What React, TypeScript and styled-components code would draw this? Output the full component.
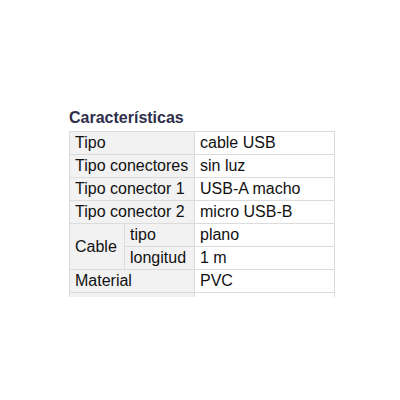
import React from "react";
import styled, { createGlobalStyle } from "styled-components";

const Global = createGlobalStyle`
  html, body { margin: 0; padding: 0; background: #fff; }
  body { font-family: "Liberation Sans", Arial, sans-serif; }
`;

const Page = styled.div`
  width: 400px;
  height: 400px;
  padding: 109px 0 0 69px;
  box-sizing: border-box;
`;

const Title = styled.h3`
  margin: 0 0 4px 0;
  font-size: 16px;
  line-height: 18px;
  font-weight: bold;
  color: #2f2f4c;
`;

const Clip = styled.div`
  height: 166px;
  overflow: hidden;
  width: 270px;
`;

const Table = styled.table`
  border-collapse: collapse;
  width: 266px;
  table-layout: fixed;
  font-size: 16px;
  color: #111;
`;

const Cell = styled.td<{ $head?: boolean }>`
  border: 1px solid #dcdcdc;
  padding: 2px 5px 2px 5px;
  height: 18px;
  line-height: 18px;
  background: ${(p) => (p.$head ? "#f2f2f2" : "#fff")};
  white-space: nowrap;
  vertical-align: middle;
`;

const Row = styled.tr``;

const rows: [string, string][] = [
  ["Tipo", "cable USB"],
  ["Tipo conectores", "sin luz"],
  ["Tipo conector 1", "USB-A macho"],
  ["Tipo conector 2", "micro USB-B"],
];

export default function App() {
  return (
    <Page>
      <Global />
      <Title>Características</Title>
      <Clip>
        <Table>
          <colgroup>
            <col style={{ width: 55 }} />
            <col style={{ width: 70 }} />
            <col style={{ width: 140 }} />
          </colgroup>
          <tbody>
            {rows.map(([k, v]) => (
              <Row key={k}>
                <Cell $head colSpan={2}>{k}</Cell>
                <Cell>{v}</Cell>
              </Row>
            ))}
            <Row>
              <Cell $head rowSpan={2}>Cable</Cell>
              <Cell $head>tipo</Cell>
              <Cell>plano</Cell>
            </Row>
            <Row>
              <Cell $head>longitud</Cell>
              <Cell>1 m</Cell>
            </Row>
            <Row>
              <Cell $head colSpan={2}>Material</Cell>
              <Cell>PVC</Cell>
            </Row>
            <Row>
              <Cell $head colSpan={2}></Cell>
              <Cell></Cell>
            </Row>
          </tbody>
        </Table>
      </Clip>
    </Page>
  );
}
